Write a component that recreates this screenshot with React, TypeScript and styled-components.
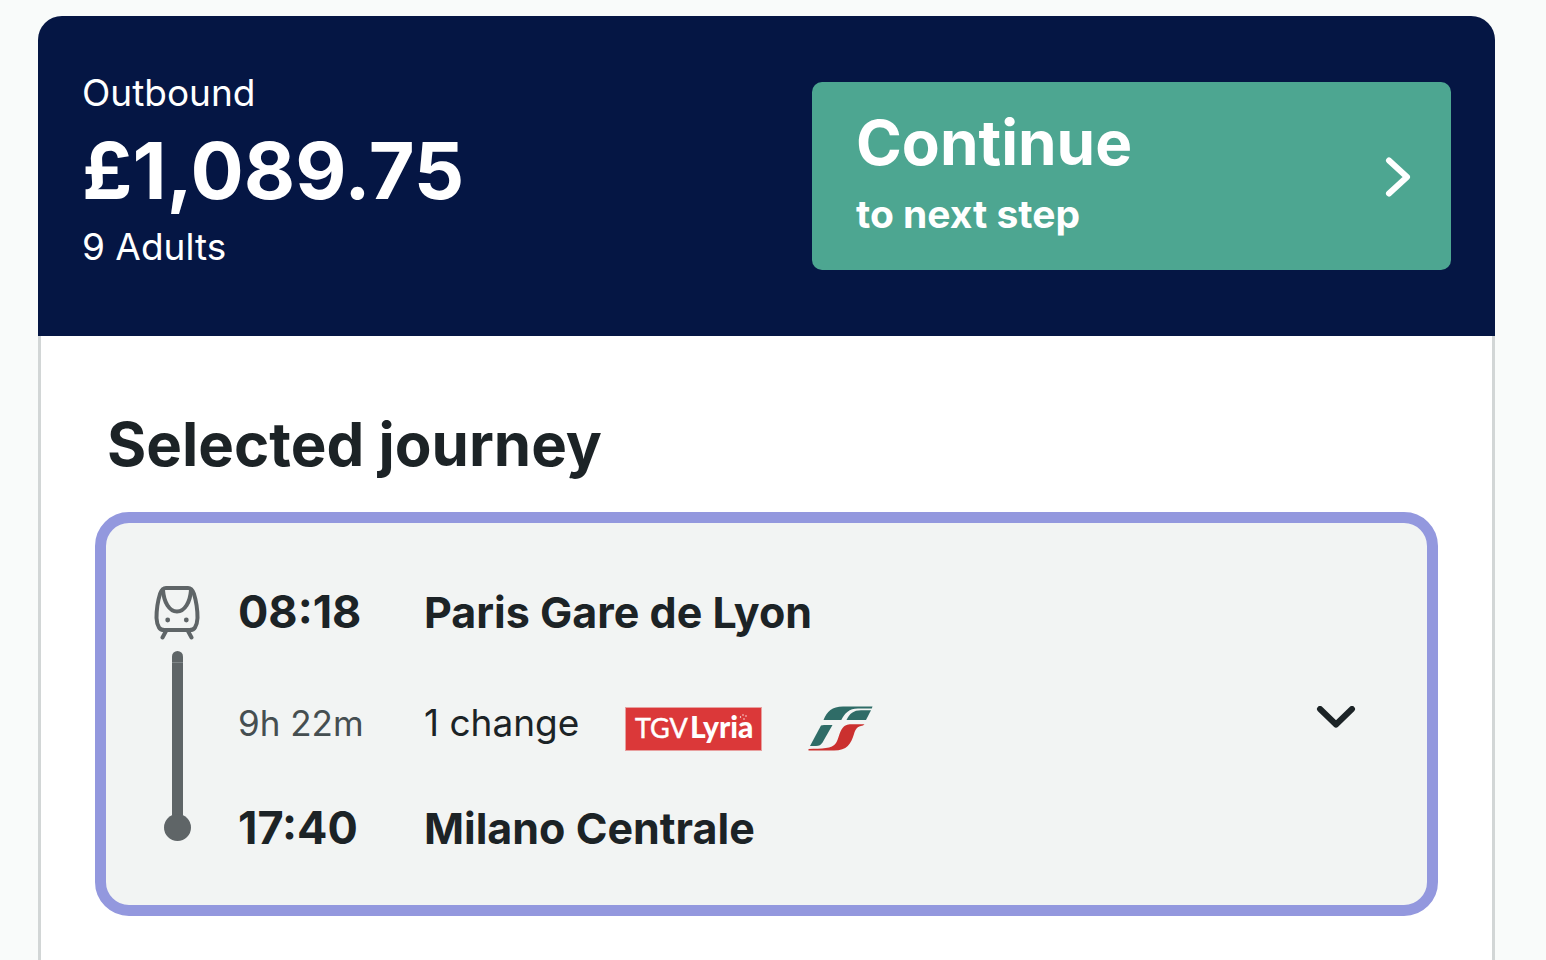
import React from "react";
import styled, { createGlobalStyle } from "styled-components";

const GlobalStyle = createGlobalStyle`
  * { box-sizing: border-box; }
  body {
    margin: 0;
    background: #f9fbfa;
    color: #1c2326;
    font-family: Inter, "Liberation Sans", sans-serif;
  }
  h2, p, ol { margin: 0; padding: 0; }
`;

const Page = styled.main`
  display: flex;
  min-height: 100vh;
  padding: 16px 51px 0 38px;
`;

const Card = styled.section`
  flex: 1;
  min-width: 0;
  background: #fff;
  border: solid #d2d6d6;
  border-width: 0 3px;
  border-radius: 24px 24px 0 0;
`;

const Header = styled.header`
  display: flex;
  flex-wrap: wrap;
  justify-content: space-between;
  align-items: flex-start;
  gap: 24px;
  min-height: 320px;
  margin: 0 -3px;
  padding: 53px 44px 44px;
  border-radius: 24px 24px 0 0;
  background: #051644;
  color: #fff;
`;

const Summary = styled.div`
  display: flex;
  flex-direction: column;
`;

const SummaryText = styled.p`
  font-size: 37px;
  line-height: 48px;
`;

const Price = styled.p`
  font-size: 79px;
  font-weight: 700;
  line-height: 106px;
`;

const ContinueButton = styled.button`
  display: flex;
  align-items: center;
  justify-content: space-between;
  width: 639px;
  max-width: 100%;
  margin-top: 13px;
  padding: 24px 40px 22px 44px;
  border: 0;
  border-radius: 10px;
  background: #4da691;
  color: #fff;
  font-family: inherit;
  font-weight: 700;
  text-align: left;
  cursor: pointer;
`;

const ButtonLabel = styled.span`
  display: flex;
  flex-direction: column;
`;

const ButtonTitle = styled.span`
  font-size: 62px;
  line-height: 74px;
`;

const ButtonNote = styled.span`
  font-size: 39px;
  line-height: 68px;
`;

const Body = styled.div`
  padding: 64px 54px 44px;
`;

const Title = styled.h2`
  padding-left: 12px;
  font-size: 60px;
  font-weight: 700;
  line-height: 88px;
`;

const Journey = styled.article`
  display: flex;
  align-items: center;
  margin-top: 24px;
  padding: 62px 66px 50px 48px;
  border: 11px solid #9398de;
  border-radius: 34px;
  background: #f2f4f3;
`;

const Rail = styled.div`
  display: flex;
  flex-direction: column;
  align-items: center;
  align-self: stretch;
  width: 46px;
  padding-bottom: 14px;
`;

const RailCap = styled.span`
  width: 11px;
  height: 11px;
  margin-top: 11px;
  border-radius: 6px 6px 0 0;
  background: #5f6567;
`;

const RailLine = styled.span`
  flex: 1;
  width: 11px;
  border-top: 1px solid #7f8587;
  background: #5f6567;
`;

const RailDot = styled.span`
  width: 27px;
  height: 27px;
  margin-top: -1px;
  border-radius: 50%;
  background: #5f6567;
`;

const Stops = styled.ol`
  display: grid;
  flex: 1;
  grid-template-rows: 54px 62px 54px;
  gap: 50px;
  margin-left: 38px;
  list-style: none;
`;

const Stop = styled.li<{ $strong?: boolean }>`
  display: grid;
  grid-template-columns: 186px 1fr;
  align-items: end;
  font-size: ${(p) => (p.$strong ? 43 : 37)}px;
  font-weight: ${(p) => (p.$strong ? 700 : 400)};
  line-height: ${(p) => (p.$strong ? 54 : 56)}px;
`;

const Time = styled.time`
  font-size: 45px;
`;

const Duration = styled.span`
  color: #454e50;
  font-size: 35px;
`;

const Changes = styled.span`
  display: flex;
  align-items: flex-end;
  gap: 46px;
`;

const ExpandButton = styled.button`
  display: flex;
  padding: 4px;
  border: 0;
  background: none;
  color: #1c2326;
  cursor: pointer;
`;

const TrainIcon = () => (
  <svg width="46" height="55" viewBox="0 0 46 55" fill="none" stroke="#5f6567" strokeWidth="4" strokeLinecap="round" strokeLinejoin="round" aria-hidden="true">
    <path d="M12 3H34C37.500 3 38.800 5.600 40 9C42.500 17 43.500 25 43.500 33C43.300 37 42.500 40 41 42.500C40 44.500 38 45 35.500 45H10.500C8 45 6 44.500 5 42.500C3.500 40 2.700 37 2.500 33C2.500 25 3.500 17 6 9C7.200 5.600 8.500 3 12 3Z" />
    <path d="M9 5.500C10 17 15 26.500 23 26.500S36 17 37 5.500" />
    <path d="M12 46L8.500 52.500M34 46L37.500 52.500" />
    <circle cx="13.700" cy="35" r="2.400" fill="#5f6567" stroke="none" />
    <circle cx="32.300" cy="35" r="2.400" fill="#5f6567" stroke="none" />
  </svg>
);

const LyriaLogo = () => (
  <svg width="137" height="44" viewBox="0 0 137 44" role="img" aria-label="TGV Lyria">
    <rect width="137" height="44" fill="#e8a09f" />
    <rect x="1" y="1" width="135" height="42" fill="#db3839" />
    <g fill="#fff">
      <text x="10" y="31" fontFamily="Lato" fontSize="27" stroke="#fff" strokeWidth="0.500">TGV</text>
      <text x="65" y="31" fontFamily="Lato" fontSize="30" fontWeight="900">Lyria</text>
      <circle cx="115.500" cy="10" r="0.700" />
      <circle cx="118" cy="8" r="0.700" />
      <circle cx="121" cy="9" r="0.700" />
      <circle cx="119" cy="12" r="0.700" />
    </g>
  </svg>
);

const TrenitaliaLogo = () => (
  <svg width="65" height="45" viewBox="0 0 65 45" role="img" aria-label="Trenitalia">
    <path d="M15.500 14C19 5.500 24 0.500 35 0.500H64.500L63.800 2.400H50C41 2.400 37 7 33.300 14Z" fill="#2f6c67" />
    <path d="M38.500 14C41.500 7.500 45.500 4.200 53 4.200H63L58 14Z" fill="#2f6c67" />
    <path d="M13 19.500C14 19.200 15 19 16 19H24.500L14.500 36.500C13 39 11 40 8 40H2Z" fill="#2f6c67" />
    <path d="M56.500 18.200L55 19.500C49 20.500 47.500 23 46 28C43 38 39 44.500 26 44.500H0.500V43C14 42.500 24 43 28 37C31 32.500 31 26 35 21.500C37.500 18.500 40.500 18.200 45 18.200Z" fill="#cb302f" />
  </svg>
);

export default function App() {
  return (
    <>
      <GlobalStyle />
      <Page>
        <Card>
          <Header>
            <Summary>
              <SummaryText>Outbound</SummaryText>
              <Price>£1,089.75</Price>
              <SummaryText>9 Adults</SummaryText>
            </Summary>
            <ContinueButton type="button">
              <ButtonLabel>
                <ButtonTitle>Continue</ButtonTitle>
                <ButtonNote>to next step</ButtonNote>
              </ButtonLabel>
              <svg width="26" height="40" viewBox="0 0 26 40" fill="none" stroke="#fff" strokeWidth="6" strokeLinecap="round" strokeLinejoin="round" aria-hidden="true">
                <path d="M4 3.500L22 20L4 36.500" />
              </svg>
            </ContinueButton>
          </Header>
          <Body>
            <Title>Selected journey</Title>
            <Journey>
              <Rail>
                <TrainIcon />
                <RailCap />
                <RailLine />
                <RailDot />
              </Rail>
              <Stops>
                <Stop $strong>
                  <Time>08:18</Time>
                  <span>Paris Gare de Lyon</span>
                </Stop>
                <Stop>
                  <Duration>9h 22m</Duration>
                  <Changes>
                    1 change
                    <LyriaLogo />
                    <TrenitaliaLogo />
                  </Changes>
                </Stop>
                <Stop $strong>
                  <Time>17:40</Time>
                  <span>Milano Centrale</span>
                </Stop>
              </Stops>
              <ExpandButton type="button" aria-label="Show journey details" aria-expanded="false">
                <svg width="42" height="28" viewBox="0 0 42 28" fill="none" stroke="currentColor" strokeWidth="6" strokeLinecap="round" strokeLinejoin="round" aria-hidden="true">
                  <path d="M5 3L21 18.500L37 3" />
                </svg>
              </ExpandButton>
            </Journey>
          </Body>
        </Card>
      </Page>
    </>
  );
}
